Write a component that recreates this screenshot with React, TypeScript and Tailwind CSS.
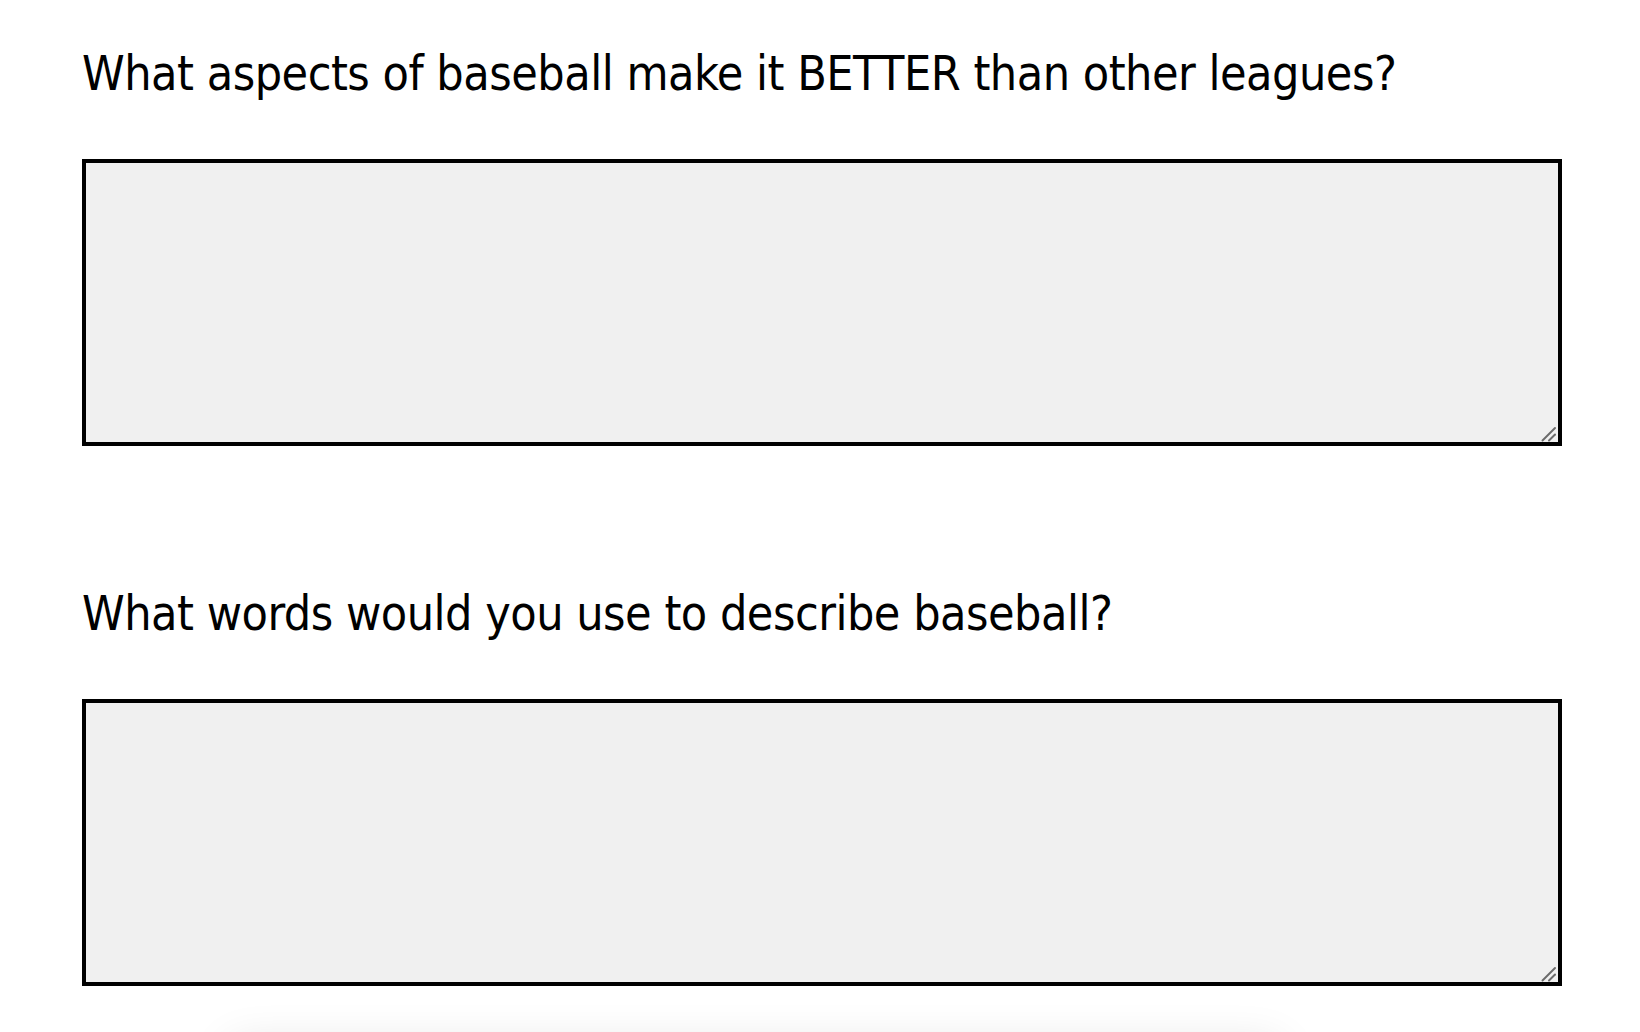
function Handle() {
  return (
    <svg className="pointer-events-none absolute right-[5px] bottom-[4px]" width="16" height="16" viewBox="0 0 16 16">
      <line x1="1.5" y1="14.5" x2="14" y2="2" stroke="#6b6b6b" strokeWidth="2" strokeLinecap="round" />
      <line x1="8" y1="14.5" x2="14" y2="8.5" stroke="#6b6b6b" strokeWidth="2" strokeLinecap="round" />
    </svg>
  );
}

function Field({ label }: { label: string }) {
  return (
    <div>
      <h2 className="m-0 whitespace-nowrap text-[48px] font-normal leading-[58px] tracking-[-0.5px] text-black [font-family:'DejaVu_Sans_Condensed','DejaVu_Sans',sans-serif]">
        {label}
      </h2>
      <div className="relative mt-[57px] h-[287px] w-[1480px]">
        <textarea className="block h-full w-full resize-none border-4 border-black bg-[#f0f0f0] outline-none" />
        <Handle />
      </div>
    </div>
  );
}

export default function App() {
  return (
    <div className="relative h-[1032px] overflow-hidden bg-white">
      <div className="flex flex-col gap-[138px] pl-[82px] pt-[44px]">
        <Field label="What aspects of baseball make it BETTER than other leagues?" />
        <Field label="What words would you use to describe baseball?" />
      </div>
      <div className="absolute left-[230px] top-[1045px] h-[60px] w-[1050px] rounded-lg bg-white shadow-[0_0_45px_rgba(0,0,0,0.12)]" />
    </div>
  );
}
